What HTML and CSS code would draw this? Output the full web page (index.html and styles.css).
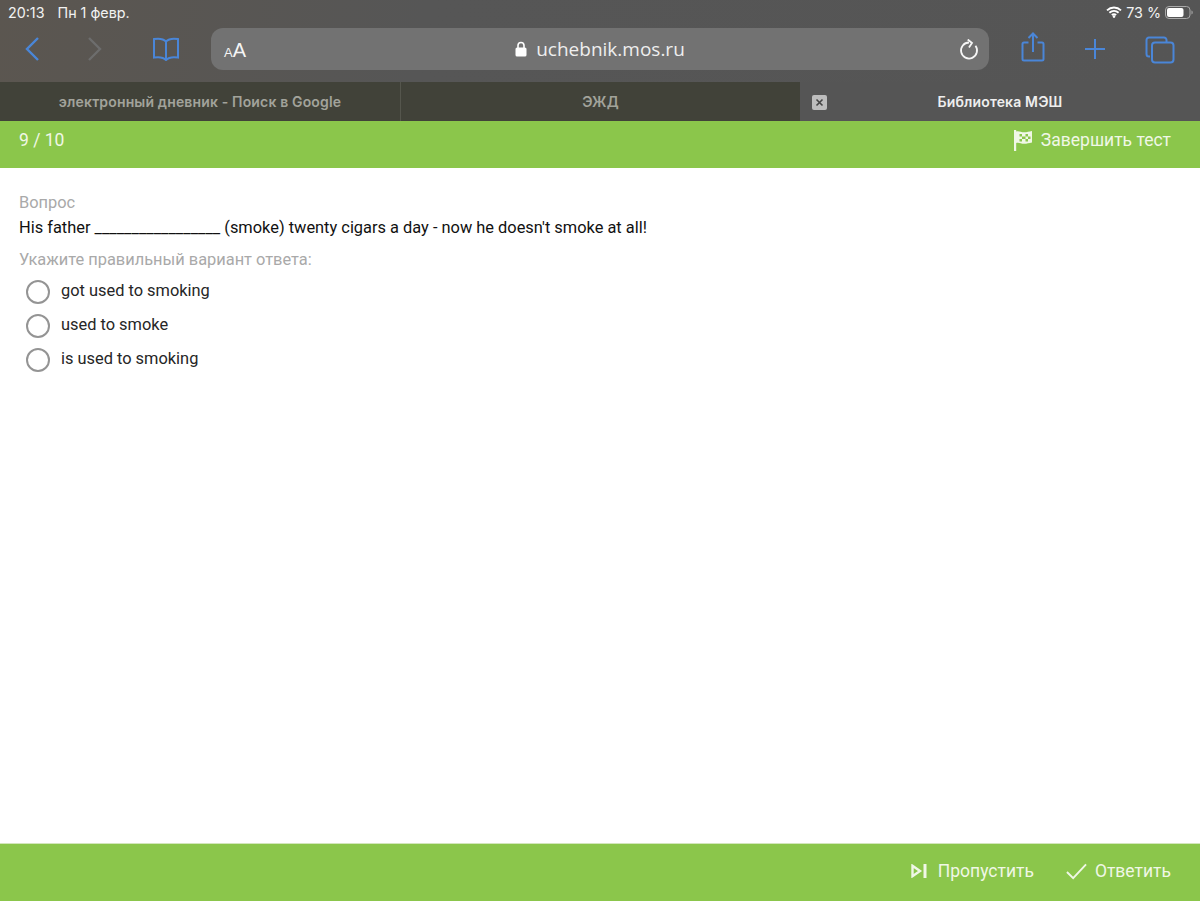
FILE: index.html
```html
<!DOCTYPE html>
<html lang="ru">
<head>
<meta charset="utf-8">
<title>Библиотека МЭШ</title>
<link rel="stylesheet" href="styles.css">
</head>
<body>
<div class="page">
  <header class="chrome">
    <div class="status">
      <div class="status-left"><span>20:13</span><span>Пн 1 февр.</span></div>
      <div class="status-right">
        <svg class="wifi" width="16" height="12" viewBox="0 0 16 12"><path d="M1 4.400C5 .6 11 .6 15 4.400" class="wifi-arc"/><path d="M3.400 6.800c2.700-2.400 6.500-2.400 9.200 0" class="wifi-arc"/><path d="M5.800 9c1.400-1 3-1 4.400 0" class="wifi-arc"/><circle cx="8" cy="10.600" r="1.300" fill="#fff"/></svg>
        <span>73 %</span>
        <svg width="28" height="13" viewBox="0 0 28 13"><rect x=".5" y=".5" width="24.500" height="12" rx="3.500" fill="none" stroke="#aaa"/><rect x="2" y="2" width="16.500" height="9" rx="2" fill="#fff"/><path d="M26.400 4.600c1 .3 1.400 1 1.400 1.900s-.4 1.600-1.400 1.900z" fill="#999"/></svg>
      </div>
    </div>
    <div class="toolbar">
      <div class="nav-group">
        <svg class="tool tool-back" width="16" height="26" viewBox="0 0 16 26"><path d="M14 2 3 13l11 11" class="blue-line"/></svg>
        <svg class="tool tool-forward" width="16" height="26" viewBox="0 0 16 26"><path d="m2 2 11 11L2 24" class="grey-line"/></svg>
        <svg class="tool tool-book" width="28" height="24" viewBox="0 0 28 24"><path d="M14 4.500C11.500 1.800 6.500 1.300 2 2v18.500c4.500-.7 9.500-.2 12 2.500 2.500-2.700 7.500-3.200 12-2.500V2c-4.500-.7-9.500-.2-12 2.500zm0 0V23" class="blue-thin"/></svg>
      </div>
      <div class="address">
        <span class="aa"><small>A</small>A</span>
        <span class="url">
          <svg width="12" height="16" viewBox="0 0 12 16"><path d="M3 7V4.500a3 3 0 0 1 6 0V7" fill="none" stroke="#fff" stroke-width="1.600"/><rect x=".5" y="6.500" width="11" height="9" rx="1.600" fill="#fff"/></svg>
          uchebnik.mos.ru
        </span>
        <svg class="reload" width="20" height="22" viewBox="0 0 20 22"><path d="M10 3.500A8 8 0 1 0 16.500 6.800" class="white-line"/><path d="M8.700 .5 13 4l-3 4.500" class="white-line"/></svg>
      </div>
      <div class="action-group">
        <svg width="24" height="30" viewBox="0 0 24 30"><path d="M7.500 10.500H3a1.500 1.500 0 0 0-1.500 1.500v15A1.500 1.500 0 0 0 3 28.500h18a1.500 1.500 0 0 0 1.500-1.500V12a1.500 1.500 0 0 0-1.500-1.500h-4.500M12 20V2M7.500 6 12 1.500 16.500 6" class="blue-thin"/></svg>
        <svg width="22" height="22" viewBox="0 0 22 22"><path d="M11 1v20M1 11h20" class="blue-thin"/></svg>
        <svg width="30" height="28" viewBox="0 0 30 28"><path d="M5 20.500H4A2.500 2.500 0 0 1 1.500 18V4A2.500 2.500 0 0 1 4 1.500h15A2.500 2.500 0 0 1 21.500 4v2" class="blue-thin"/><rect x="7" y="6.500" width="21.500" height="20" rx="3" class="blue-thin"/></svg>
      </div>
    </div>
    <nav class="tabs">
      <div class="tab">электронный дневник - Поиск в Google</div>
      <div class="tab">ЭЖД</div>
      <div class="tab tab-active">
        <span class="tab-close"><svg width="9" height="9" viewBox="0 0 9 9"><path d="m1.500 1.500 6 6m0-6-6 6" stroke="#444" stroke-width="1.600"/></svg></span>
        Библиотека МЭШ
      </div>
    </nav>
  </header>

  <div class="topbar">
    <span>9 / 10</span>
    <button class="bar-action action-finish">
      <svg width="18" height="21" viewBox="0 0 18 21"><path d="M1 0v21" stroke="#f0f7e6" stroke-width="2.400"/><path d="M2 1.500c3-1 5 .8 8 .8 3 0 5-.8 8-1.300v11.500c-3 .5-5 1.300-8 1.300s-5-1.800-8-.8z" fill="#f0f7e6"/><path d="M5.500 4h2.500v2.500H5.500zm6 0h2.500v2.500h-2.500zM8 6.500h3.500V9H8zm6 0h2.500V9H14zM5.500 9H8v2.500H5.500zm6 0H14v2.500h-2.500z" fill="#8bc64b"/></svg>
      Завершить тест
    </button>
  </div>

  <main class="content">
    <div class="muted">Вопрос</div>
    <div class="question">His father _________________ (smoke) twenty cigars a day - now he doesn't smoke at all!</div>
    <div class="muted hint">Укажите правильный вариант ответа:</div>
    <ul class="options">
      <li class="option"><span class="radio"></span>got used to smoking</li>
      <li class="option"><span class="radio"></span>used to smoke</li>
      <li class="option"><span class="radio"></span>is used to smoking</li>
    </ul>
  </main>

  <footer class="bottombar">
    <button class="bar-action action-skip">
      <svg width="16" height="14" viewBox="0 0 16 14"><path d="M1.500 1.800 9 7l-7.500 5.200z" fill="none" stroke="#f0f7e6" stroke-width="2.400"/><path d="M14 0v14" stroke="#f0f7e6" stroke-width="3"/></svg>
      Пропустить
    </button>
    <button class="bar-action">
      <svg width="21" height="17" viewBox="0 0 22 17"><path d="m1 9 6.500 6.500L21 1" fill="none" stroke="#f0f7e6" stroke-width="2"/></svg>
      Ответить
    </button>
  </footer>
</div>
</body>
</html>
```

FILE: styles.css
```css
* { box-sizing: border-box; }
html, body { margin: 0; padding: 0; }
body { font-family: Roboto, "Liberation Sans", sans-serif; background: #fff; }
.page { width: 1200px; height: 901px; display: flex; flex-direction: column; overflow: hidden; }

.chrome { background: linear-gradient(100deg, #5b5650 0%, #565656 35%, #555 100%); color: #fff; font-family: Inter, "Liberation Sans", sans-serif; }
.status { height: 24px; padding: 0 7px 0 8px; display: flex; justify-content: space-between; align-items: center; font-size: 14.300px; color: #f2f2f2; }
.status-left { display: flex; gap: 13px; }
.status-right { display: flex; align-items: center; gap: 4px; }
.wifi-arc { fill: none; stroke: #fff; stroke-width: 1.900; }

.toolbar { height: 58px; display: flex; align-items: flex-start; padding-top: 4px; }
.nav-group { width: 211px; height: 42px; display: flex; align-items: center; padding-left: 24px; }
.tool-forward { margin-left: 47px; }
.tool-book { margin-left: 49px; }
.blue-line { fill: none; stroke: #4a86d8; stroke-width: 2.400; }
.grey-line { fill: none; stroke: #6d6d6d; stroke-width: 2.400; }
.blue-thin { fill: none; stroke: #4a86d8; stroke-width: 2; }
.white-line { fill: none; stroke: #f5f5f5; stroke-width: 1.800; }

.address { width: 778px; height: 42px; border-radius: 12px; background: #727272; display: flex; align-items: center; justify-content: center; position: relative; }
.aa { position: absolute; left: 13px; top: 10px; font-size: 20px; line-height: 24px; font-family: "Liberation Sans", sans-serif; color: #f5f5f5; }
.aa small { font-size: 13px; }
.url { display: flex; align-items: center; gap: 9px; font-size: 19px; color: #eee; font-family: "Open Sans", "Liberation Sans", sans-serif; }
.reload { position: absolute; right: 10px; top: 11px; }
.action-group { flex: 1; height: 42px; display: flex; align-items: center; padding: 0 25px 0 32px; justify-content: space-between; }
.action-group svg:first-child { margin-top: -4px; }
.action-group svg:last-child { margin-top: 2px; }

.tabs { height: 39px; display: flex; background: #414239; font-size: 14px; font-weight: 600; color: #a2a39b; }
.tab { width: 400px; display: flex; align-items: center; justify-content: center; position: relative; border-left: 1px solid #55564d; letter-spacing: .15px; }
.tab:first-child { border-left: 0; }
.tab-active { background: #555; color: #eee; border-left: 0; }
.tab-close { position: absolute; left: 12px; top: 13px; width: 15px; height: 15px; background: #bdbdbd; border-radius: 2px; display: flex; align-items: center; justify-content: center; }

.topbar { height: 47px; flex: none; background: #8bc64b; color: #f0f7e6; display: flex; align-items: center; justify-content: space-between; padding: 0 29px 9px 19px; font-size: 17.500px; }
.bar-action { border: 0; background: none; padding: 0; font: inherit; color: #f0f7e6; display: flex; align-items: center; gap: 8px; }
.action-finish { gap: 9px; }
.action-skip { gap: 11px; }

.content { flex: 1; padding: 26px 19px 0; font-size: 16.400px; line-height: 24px; color: #111; }
.muted { color: #a9a9a9; height: 22px; line-height: 18px; }
.question { height: 35px; line-height: 24px; }
.hint { height: 22px; }
.options { list-style: none; margin: 0; padding: 1px 0 0 7px; color: #262626; }
.option { height: 34px; display: flex; align-items: center; gap: 11px; }
.radio { width: 24px; height: 24px; border: 2.500px solid #949494; border-radius: 50%; margin-top: 2px; }

.bottombar { height: 58px; flex: none; background: #8bc64b; border-top: 1px solid #d3e6bb; color: #f0f7e6; display: flex; justify-content: flex-end; align-items: center; gap: 32px; padding: 0 29px 3px 0; font-size: 17.500px; }
```
